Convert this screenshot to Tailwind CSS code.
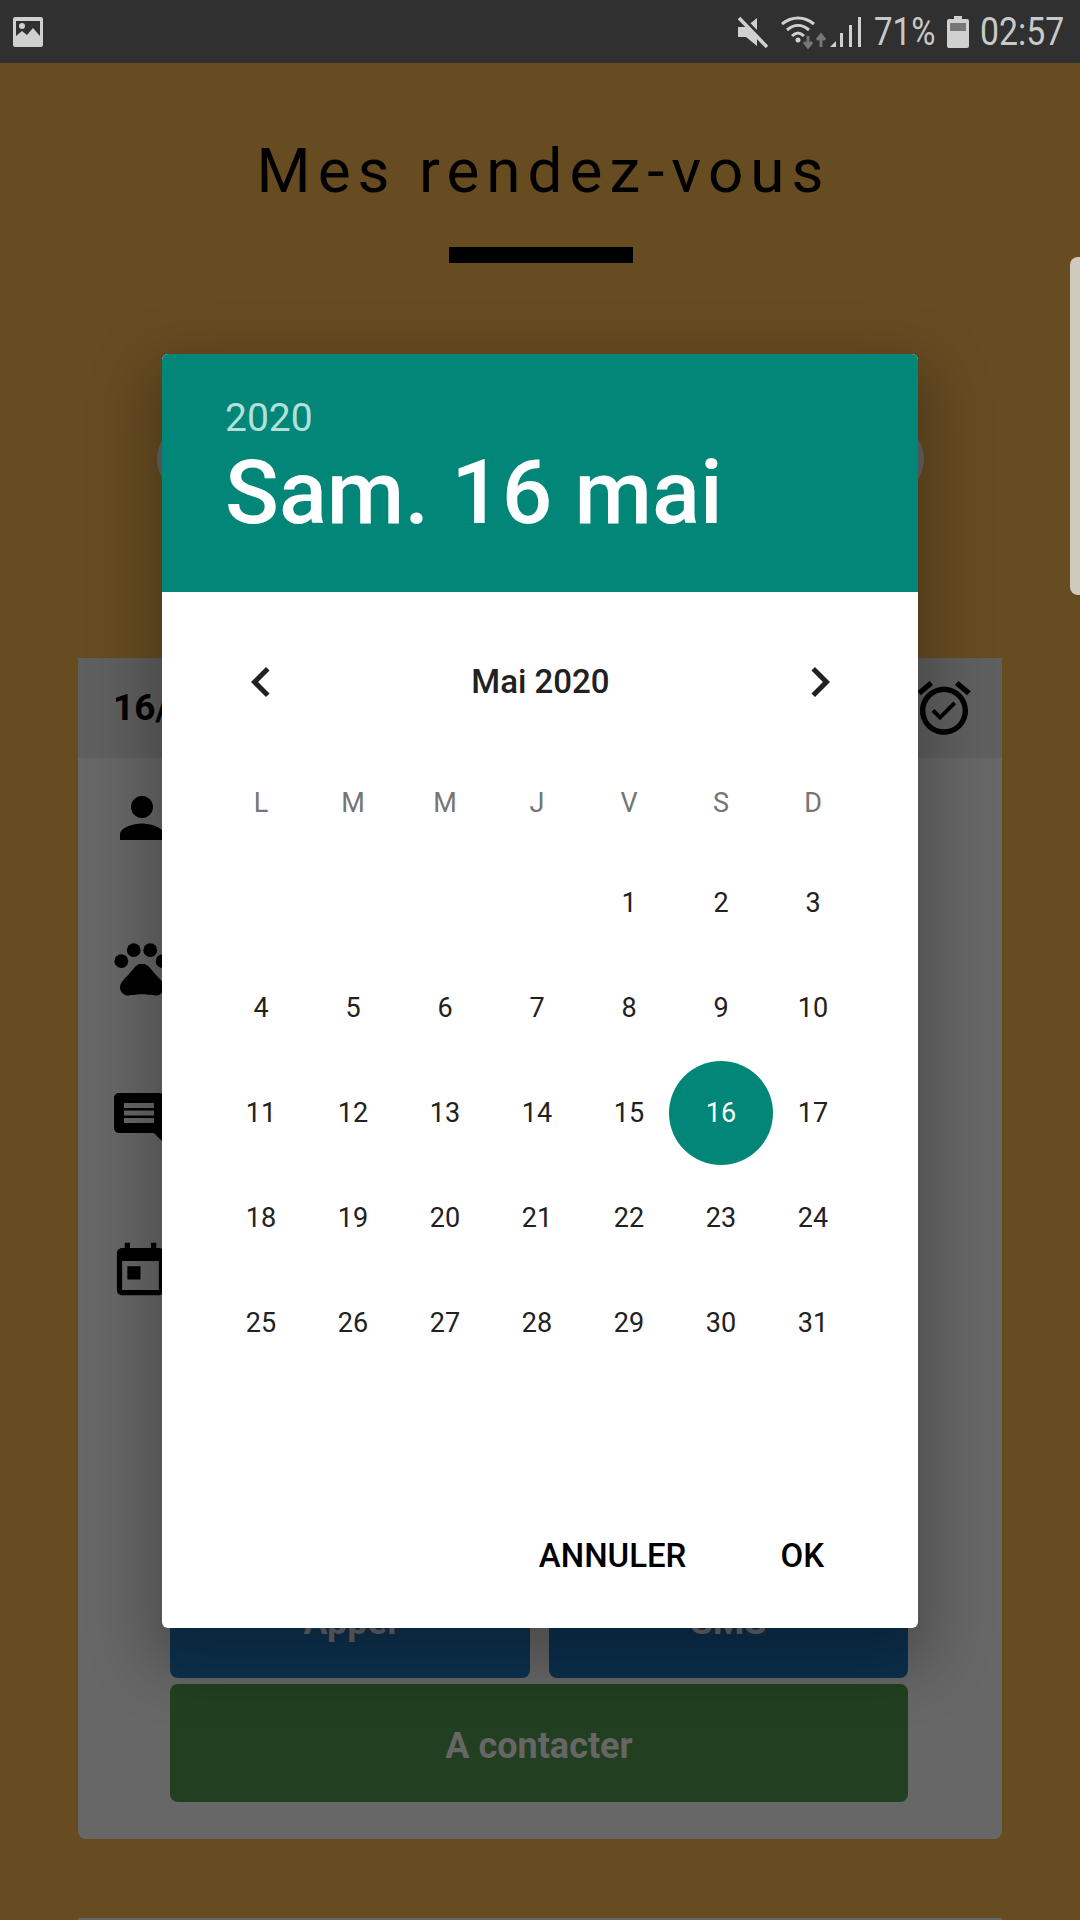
<!DOCTYPE html>
<html>
<head>
<meta charset="utf-8">
<script src="https://cdn.jsdelivr.net/npm/@tailwindcss/browser@4"></script>
</head>
<body class="m-0">
<div class="relative w-[1080px] h-[1920px] overflow-hidden bg-[#674c22] font-['Roboto',sans-serif]">
  <!-- status bar -->
  <div class="h-[63px] bg-[#303030] flex items-center justify-between pl-[13px] pr-[18px] text-[#c9c9c9]">
    <svg width="30" height="30" viewBox="0 0 30 30"><rect width="30" height="30" rx="2" fill="#d0d0d0"/><rect x="3" y="4" width="24" height="15" fill="#303030"/><circle cx="9" cy="9" r="3" fill="#d0d0d0"/><path d="M3 25V19L9 14L14 18L20 11L27 19V25Z" fill="#d0d0d0"/></svg>
    <div class="flex items-center">
      <svg width="30" height="32" viewBox="0 0 30 32" class="mr-[12px]"><path d="M0 11H8L19 2V30L8 21H0Z" fill="#d0d0d0"/><path d="M3 1L30 29" stroke="#303030" stroke-width="5"/><path d="M1 2L29 31" stroke="#d0d0d0" stroke-width="3.5"/></svg>
      <svg width="48" height="34" viewBox="0 0 48 34" class="mr-[1px]"><path d="M2 9C12 1 24 1 34 9M7 15C14 9 22 9 29 15M12 21C16 17 20 17 24 21" fill="none" stroke="#d0d0d0" stroke-width="3"/><circle cx="18" cy="25" r="2.5" fill="#d0d0d0"/><path d="M28 21V31M24 27L28 32L32 27" fill="none" stroke="#777" stroke-width="3"/><path d="M41 32V21M37 25L41 20L45 25" fill="none" stroke="#777" stroke-width="3"/></svg>
      <svg width="32" height="32" viewBox="0 0 32 32" class="mr-[13px]"><path d="M1 31L7 25V31Z" fill="#d0d0d0"/><rect x="11" y="17" width="3" height="14" fill="#d0d0d0"/><rect x="20" y="9" width="3" height="22" fill="#d0d0d0"/><rect x="29" y="1" width="3" height="30" fill="#d0d0d0"/></svg>
      <span class="text-[38px] leading-none font-normal inline-block w-[60px] scale-x-[.87] origin-left whitespace-nowrap">71%</span>
      <svg width="22" height="32" viewBox="0 0 22 32" class="ml-[13px] mr-[11px]"><path d="M7 0H15V3H20Q22 3 22 5V30Q22 32 20 32H2Q0 32 0 30V5Q0 3 2 3H7Z" fill="#d0d0d0"/><rect x="3" y="7" width="16" height="8" fill="#777"/></svg>
      <span class="text-[38px] leading-none font-normal inline-block w-[82px] scale-x-[.89] origin-left whitespace-nowrap">02:57</span>
    </div>
  </div>

  <!-- page -->
  <div class="flex flex-col items-center">
    <h1 class="mt-[78px] ml-[7px] text-[62px] leading-[60px] font-normal tracking-[.113em] text-black whitespace-nowrap">Mes rendez-vous</h1>
    <div class="mt-[46px] ml-[1px] w-[184px] h-[16px] bg-black"></div>
    <div class="mt-[159px] w-[767px] h-[74px] rounded-full bg-[#666666]"></div>
    <div class="mt-[162px] w-[924px] h-[1181px] rounded-b-lg bg-[#676767] flex flex-col">
      <div class="h-[100px] shrink-0 bg-[#5f5f5f] flex items-center justify-between pl-[35px] pr-[26px]">
        <span class="text-[37px] font-bold text-black">16/05/2020</span>
        <svg width="64" height="64" viewBox="0 0 24 24" fill="#000"><path d="M22 5.72l-4.6-3.86-1.29 1.53 4.6 3.86L22 5.72zM7.88 3.39L6.6 1.86 2 5.71l1.29 1.53 4.59-3.85zM12 4c-4.97 0-9 4.03-9 9s4.03 9 9 9 9-4.03 9-9-4.03-9-9-9zm0 16c-3.86 0-7-3.14-7-7s3.14-7 7-7 7 3.14 7 7-3.14 7-7 7zm-1.46-5.47L8.41 12.4l-1.06 1.06 3.18 3.18 6-6-1.06-1.06-4.93 4.95z"/></svg>
      </div>
      <div class="flex flex-col pl-[31px] flex-1">
        <svg class="mt-[27px]" width="66" height="66" viewBox="0 0 24 24" fill="#000"><path d="M12 12c2.21 0 4-1.79 4-4s-1.79-4-4-4-4 1.79-4 4 1.79 4 4 4zm0 2c-2.67 0-8 1.34-8 4v2h16v-2c0-2.66-5.33-4-8-4z"/></svg>
        <svg class="mt-[84px]" width="66" height="66" viewBox="0 0 24 24" fill="#000"><circle cx="4.5" cy="9.5" r="2.5"/><circle cx="9" cy="5.5" r="2.5"/><circle cx="15" cy="5.5" r="2.5"/><circle cx="19.5" cy="9.5" r="2.5"/><path d="M17.34 14.86c-.87-1.02-1.6-1.89-2.48-2.91-.46-.54-1.05-1.08-1.75-1.32-.11-.04-.22-.07-.33-.09-.25-.04-.52-.04-.78-.04s-.53 0-.79.05c-.11.02-.22.05-.33.09-.7.24-1.28.78-1.75 1.32-.87 1.02-1.6 1.89-2.48 2.91-1.31 1.31-2.92 2.76-2.62 4.79.29 1.02 1.02 2.03 2.33 2.32.73.15 3.06-.44 5.54-.44h.18c2.48 0 4.81.58 5.54.44 1.31-.29 2.04-1.31 2.33-2.32.31-2.04-1.3-3.49-2.61-4.8z"/></svg>
        <svg class="mt-[87px]" width="60" height="60" viewBox="0 0 24 24" fill="#000"><path d="M21.99 4c0-1.1-.89-2-1.99-2H4c-1.1 0-2 .9-2 2v12c0 1.1.9 2 2 2h14l4 4-.01-18zM18 14H6v-2h12v2zm0-3H6V9h12v2zm0-3H6V6h12v2z"/></svg>
        <svg class="mt-[92px]" width="63" height="63" viewBox="0 0 24 24" fill="#000"><path d="M19 3h-1V1h-2v2H8V1H6v2H5c-1.11 0-1.99.9-1.99 2L3 19c0 1.1.89 2 2 2h14c1.1 0 2-.9 2-2V5c0-1.1-.9-2-2-2zm0 16H5V8h14v11zM7 10h5v5H7z"/></svg>
        <div class="mt-auto mb-[37px] ml-[61px] flex flex-col gap-[6px] font-bold text-[36px] text-[#666]">
          <div class="flex gap-[19px] h-[117px]">
            <div class="w-[360px] rounded-b-lg bg-[#0d324f] pt-[5px] flex items-center justify-center">Appel</div>
            <div class="w-[359px] rounded-b-lg bg-[#0c304e] pt-[5px] flex items-center justify-center">SMS</div>
          </div>
          <div class="w-[738px] h-[118px] rounded-lg bg-[#224021] pt-[5px] flex items-center justify-center">A contacter</div>
        </div>
      </div>
    </div>
    <div class="mt-[79px] w-[924px] h-[4px] bg-[#676767]"></div>
  </div>

  <!-- side handle -->
  <div class="absolute left-[1070px] top-[257px] w-[20px] h-[338px] rounded-l-lg bg-[#d0cabd]"></div>

  <!-- date picker dialog -->
  <div class="absolute left-[162px] top-[354px] w-[756px] h-[1274px] bg-white rounded-md overflow-hidden flex flex-col shadow-[0_24px_60px_14px_rgba(0,0,0,0.26)]">
    <div class="h-[238px] shrink-0 bg-[#018678] pl-[63px] pt-[42px]">
      <div class="text-[39px] leading-[44px] text-[#b3e0da]">2020</div>
      <div class="mt-[3px] text-[89px] leading-[100px] font-medium text-white whitespace-nowrap">Sam. 16 mai</div>
    </div>
    <div class="flex-1 flex flex-col">
      <div class="mt-[60px] h-[60px] flex items-center justify-between pl-[69px] pr-[68px]">
        <svg width="60" height="60" viewBox="0 0 24 24" fill="#212121"><path d="M15.41 7.41L14 6l-6 6 6 6 1.41-1.41L10.83 12z"/></svg>
        <span class="text-[33px] font-medium text-[#212121]">Mai 2020</span>
        <svg width="60" height="60" viewBox="0 0 24 24" fill="#212121"><path d="M8.59 16.59L10 18l6-6-6-6-1.41 1.41L13.17 12z"/></svg>
      </div>
      <div class="mt-[71px] pl-[53px] w-[697px] grid grid-cols-7 text-center text-[27px] leading-[40px] text-[#757575]">
        <span>L</span><span>M</span><span>M</span><span>J</span><span>V</span><span>S</span><span>D</span>
      </div>
      <div class="mt-[28px] pl-[53px] w-[697px] grid grid-cols-7 auto-rows-[105px] text-center text-[27px] text-[#212121]">
        <span></span><span></span><span></span><span></span>
        <span class="flex items-center justify-center">1</span><span class="flex items-center justify-center">2</span><span class="flex items-center justify-center">3</span>
        <span class="flex items-center justify-center">4</span><span class="flex items-center justify-center">5</span><span class="flex items-center justify-center">6</span><span class="flex items-center justify-center">7</span><span class="flex items-center justify-center">8</span><span class="flex items-center justify-center">9</span><span class="flex items-center justify-center">10</span>
        <span class="flex items-center justify-center">11</span><span class="flex items-center justify-center">12</span><span class="flex items-center justify-center">13</span><span class="flex items-center justify-center">14</span><span class="flex items-center justify-center">15</span>
        <span class="flex items-center justify-center"><span class="w-[104px] h-[104px] shrink-0 -mt-[2px] pt-[2px] rounded-full bg-[#018678] text-white flex items-center justify-center">16</span></span>
        <span class="flex items-center justify-center">17</span>
        <span class="flex items-center justify-center">18</span><span class="flex items-center justify-center">19</span><span class="flex items-center justify-center">20</span><span class="flex items-center justify-center">21</span><span class="flex items-center justify-center">22</span><span class="flex items-center justify-center">23</span><span class="flex items-center justify-center">24</span>
        <span class="flex items-center justify-center">25</span><span class="flex items-center justify-center">26</span><span class="flex items-center justify-center">27</span><span class="flex items-center justify-center">28</span><span class="flex items-center justify-center">29</span><span class="flex items-center justify-center">30</span><span class="flex items-center justify-center">31</span>
      </div>
      <div class="mt-auto pb-[52px] pr-[94px] flex justify-end gap-[94px] text-[33px] leading-[40px] font-medium text-black">
        <span>ANNULER</span><span>OK</span>
      </div>
    </div>
  </div>
</div>
</body>
</html>
